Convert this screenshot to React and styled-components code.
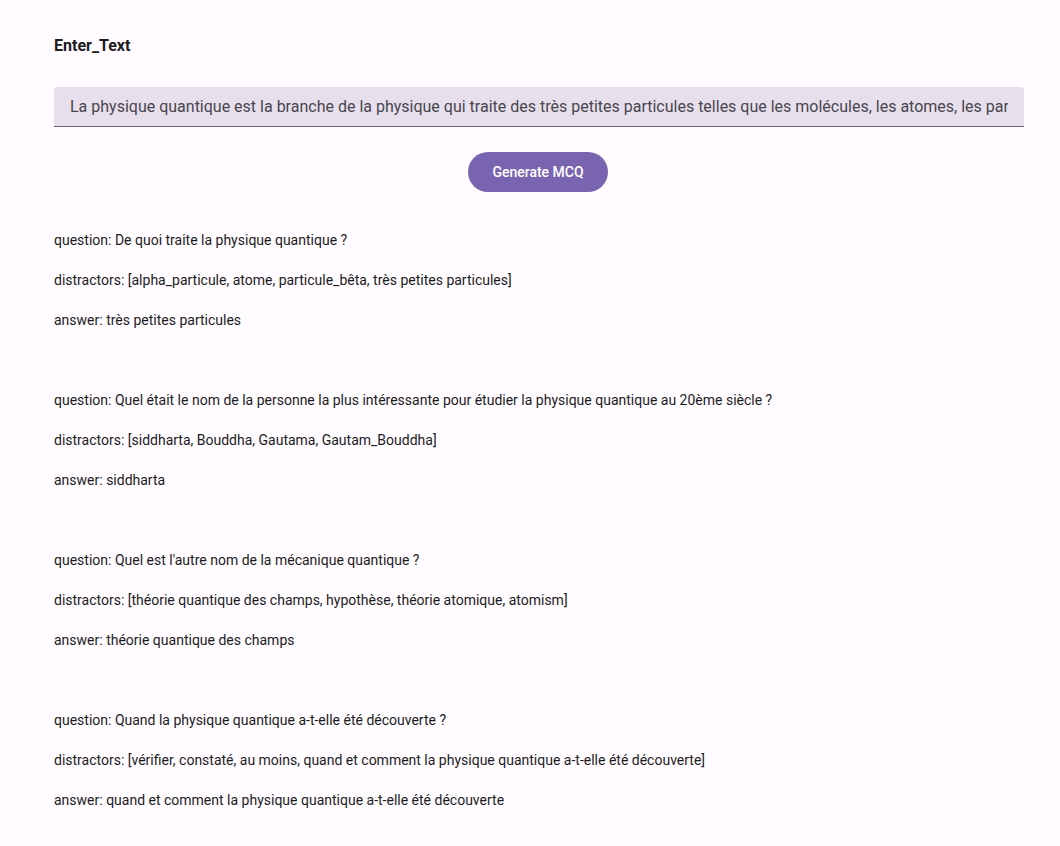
import React from 'react';
import styled, { createGlobalStyle } from 'styled-components';

const GlobalStyle = createGlobalStyle`
  html, body {
    margin: 0;
    padding: 0;
    background: #fffbfe;
    font-family: Roboto, "Noto Sans", sans-serif;
    color: #1c1b1f;
  }
`;

const Page = styled.div`
  padding: 36px 36px 0 54px;
  display: flex;
  flex-direction: column;
`;

const Title = styled.div`
  font-size: 16px;
  font-weight: 700;
  line-height: 20px;
  margin-bottom: 31px;
`;

const Field = styled.div`
  height: 40px;
  background: #e7e0ec;
  border-radius: 4px 4px 0 0;
  border-bottom: 1px solid #6a6470;
  box-sizing: border-box;
  padding: 0 16px;
  display: flex;
  align-items: center;
  overflow: hidden;
`;

// the input is scrolled to its start, so only this much of the value shows
const FieldText = styled.span`
  font-size: 16px;
  color: #49454f;
  white-space: nowrap;
  overflow: hidden;
  width: 100%;
`;

const ButtonRow = styled.div`
  display: flex;
  justify-content: center;
  margin: 25px 2px 28px 0;
`;

const Button = styled.button`
  height: 40px;
  width: 140px;
  border: none;
  border-radius: 20px;
  background: #7965af;
  color: #ffffff;
  font-family: Roboto, sans-serif;
  font-size: 14px;
  font-weight: 500;
  cursor: pointer;
`;

const List = styled.div`
  display: flex;
  flex-direction: column;
  gap: 40px;
`;

const Block = styled.div`
  display: flex;
  flex-direction: column;
`;

const Line = styled.div`
  font-size: 14px;
  line-height: 40px;
`;

const items = [
  {
    question: 'De quoi traite la physique quantique ?',
    distractors: 'alpha_particule, atome, particule_bêta, très petites particules',
    answer: 'très petites particules',
  },
  {
    question:
      'Quel était le nom de la personne la plus intéressante pour étudier la physique quantique au 20ème siècle ?',
    distractors: 'siddharta, Bouddha, Gautama, Gautam_Bouddha',
    answer: 'siddharta',
  },
  {
    question: "Quel est l'autre nom de la mécanique quantique ?",
    distractors: 'théorie quantique des champs, hypothèse, théorie atomique, atomism',
    answer: 'théorie quantique des champs',
  },
  {
    question: 'Quand la physique quantique a-t-elle été découverte ?',
    distractors:
      'vérifier, constaté, au moins, quand et comment la physique quantique a-t-elle été découverte',
    answer: 'quand et comment la physique quantique a-t-elle été découverte',
  },
];

export default function App() {
  return (
    <>
      <GlobalStyle />
      <Page>
        <Title>Enter_Text</Title>
        <Field>
          <FieldText>
            La physique quantique est la branche de la physique qui traite des très petites particules telles
            que les molécules, les atomes, les par
          </FieldText>
        </Field>
        <ButtonRow>
          <Button type="button">Generate MCQ</Button>
        </ButtonRow>
        <List>
          {items.map((it) => (
            <Block key={it.question}>
              <Line>question: {it.question}</Line>
              <Line>distractors: [{it.distractors}]</Line>
              <Line>answer: {it.answer}</Line>
            </Block>
          ))}
        </List>
      </Page>
    </>
  );
}
